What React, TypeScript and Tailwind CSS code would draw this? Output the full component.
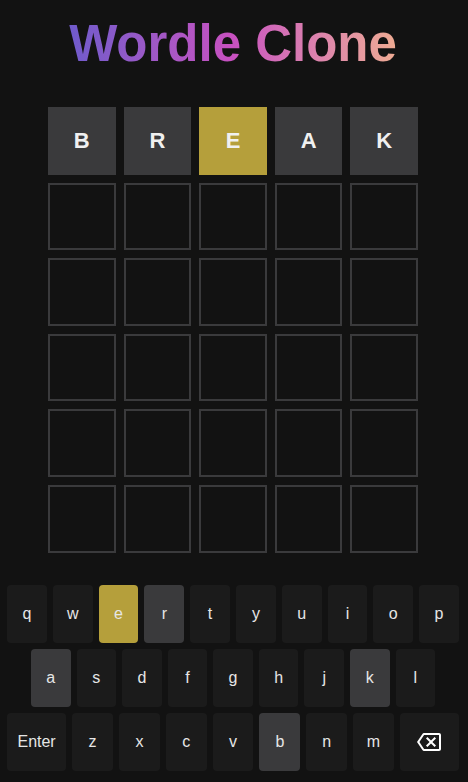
import { MdOutlineBackspace } from 'react-icons/md';

type Mark = 'present' | 'absent' | 'correct';

const guess = 'BREAK';
const marks: Mark[] = ['absent', 'absent', 'present', 'absent', 'absent'];

const keyState: Record<string, Mark> = {
  e: 'present',
  r: 'absent',
  a: 'absent',
  k: 'absent',
  b: 'absent',
};

const rows = [
  ['q', 'w', 'e', 'r', 't', 'y', 'u', 'i', 'o', 'p'],
  ['a', 's', 'd', 'f', 'g', 'h', 'j', 'k', 'l'],
  ['enter', 'z', 'x', 'c', 'v', 'b', 'n', 'm', 'back'],
];

function tileClass(mark?: Mark) {
  if (mark === 'present') return 'bg-[#b59f3b] border-[#b59f3b]';
  if (mark === 'correct') return 'bg-[#538d4e] border-[#538d4e]';
  if (mark === 'absent') return 'bg-[#3a3a3c] border-[#3a3a3c]';
  return 'bg-[#121212] border-[#3a3a3c]';
}

function keyClass(mark?: Mark) {
  if (mark === 'present') return 'bg-[#b59f3b]';
  if (mark === 'correct') return 'bg-[#538d4e]';
  if (mark === 'absent') return 'bg-[#3a3a3c]';
  return 'bg-[#1b1b1b]';
}

function Board() {
  return (
    <div className="ml-[48px] grid w-[370px] grid-cols-5 gap-2">
      {Array.from({ length: 30 }).map((_, i) => {
        const row = Math.floor(i / 5);
        const col = i % 5;
        const letter = row === 0 ? guess[col] : '';
        const mark = row === 0 ? marks[col] : undefined;
        return (
          <div
            key={i}
            className={`flex aspect-square items-center justify-center border-2 text-[22px] font-bold text-[#f0f0f0] ${tileClass(mark)}`}
          >
            {letter}
          </div>
        );
      })}
    </div>
  );
}

function Keyboard() {
  return (
    <div className="ml-[7px] flex w-[452px] flex-col gap-[6px]">
      {rows.map((row, r) => (
        <div key={r} className={`flex gap-[6px] ${r === 1 ? 'px-[24px]' : ''}`}>
          {row.map((k) => {
            const wide = k === 'enter' || k === 'back';
            return (
              <button
                key={k}
                type="button"
                className={`flex h-[58px] items-center justify-center rounded text-base text-[#e6e6e6] ${
                  wide ? 'flex-[1.45]' : 'flex-1'
                } ${keyClass(keyState[k])}`}
              >
                {k === 'enter' ? 'Enter' : k === 'back' ? <MdOutlineBackspace size={24} className="text-white" /> : k}
              </button>
            );
          })}
        </div>
      ))}
    </div>
  );
}

export default function App() {
  return (
    <div className="min-h-[782px] w-[468px] bg-[#121212] font-['Liberation_Sans',Arial,sans-serif]">
      <div className="w-[466px] pt-[14px]">
        <h1 className="bg-gradient-to-r from-[#4158d0] via-[#c850c0] to-[#ffcc70] bg-clip-text text-center text-[51px] leading-[normal] font-bold text-transparent">
          Wordle Clone
        </h1>
        <div className="mt-[34px]">
          <Board />
        </div>
        <div className="mt-[32px]">
          <Keyboard />
        </div>
      </div>
    </div>
  );
}
